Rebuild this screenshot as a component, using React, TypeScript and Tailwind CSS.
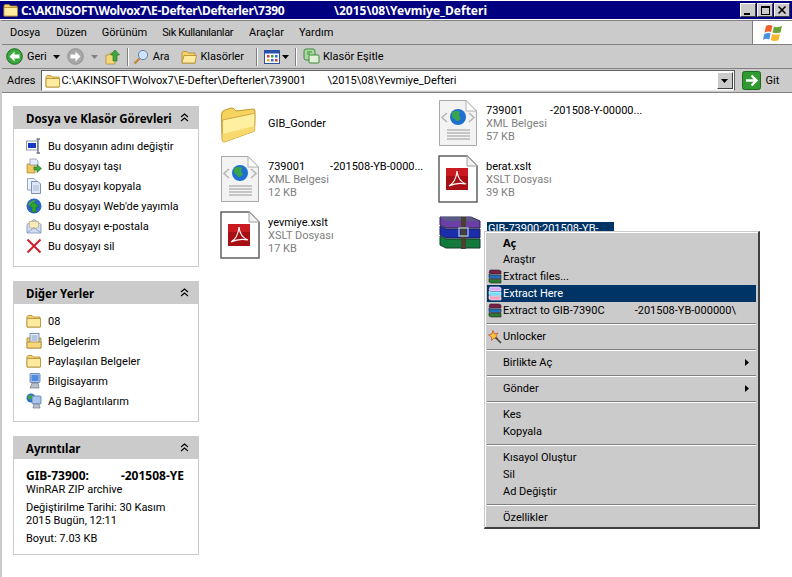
import React from "react";

const Folder = ({ s = 16, open = false }: { s?: number; open?: boolean }) => (
  <svg width={s} height={s} viewBox="0 0 16 16" className="shrink-0">
    <path d="M1 3.5 L2 2.5 H6 L7.5 4 H14 V14 H1 Z" fill="#f5cf6a" stroke="#b08a2c" strokeWidth="0.8" />
    <path d={open ? "M1 14 L3 6.5 H15.5 L14 14 Z" : "M1 5.5 H14.5 V14 H1 Z"} fill="#fdeb9f" stroke="#b08a2c" strokeWidth="0.8" />
  </svg>
);

const BigFolder = () => (
  <svg width="38" height="36" viewBox="0 0 38 36">
    <path d="M1.5 8 Q1.5 3.5 5 3 L11 1 Q14 0.5 16 4 L33 2 Q35.5 2 35 5 L34.5 24 L4 35 Q2 35 2 32 Z" fill="#f6d25f" stroke="#c09a32" />
    <path d="M2.5 13 L33.5 6.5 Q35.5 6.5 35 9 L34.5 24 L4 35 Q2.5 35 2.5 32 Z" fill="#fdf0a0" stroke="#d0aa44" />
    <path d="M2.5 27 L34.5 19 L34.5 24 L4 35 Q2.5 35 2.5 32 Z" fill="#f8d96e" />
  </svg>
);

const XmlDoc = () => (
  <svg width="40" height="48" viewBox="0 0 40 48">
    <path d="M1.5 1.5 H28 L38.5 12 V46.5 H1.5 Z" fill="#f3f3f3" stroke="#a8a8a8" />
    <path d="M28 1.5 V12 H38.5 Z" fill="#fff" stroke="#b0b0b0" />
    <circle cx="20" cy="18" r="8" fill="#1f6fd0" />
    <path d="M14 14 Q18 10 22 13 Q20 17 23 19 Q19 25 17 20 Q13 19 14 14 Z" fill="#3aa44a" />
    <path d="M9 14 L4 18.5 L9 23 M31 14 L36 18.5 L31 23" fill="none" stroke="#b5b5b5" strokeWidth="1.5" />
    <path d="M9 31 H32 M9 34 H32 M9 37 H32 M9 40 H32" stroke="#999" strokeWidth="1.2" />
  </svg>
);

const PdfDoc = () => (
  <svg width="40" height="48" viewBox="0 0 40 48">
    <path d="M1 1 H29 L39 11 V47 H1 Z" fill="#fff" stroke="#606060" strokeWidth="1.5" />
    <path d="M29 1 V11 H39 Z" fill="#f2f2f2" stroke="#a0a0a0" />
    <rect x="8" y="13" width="22" height="22" fill="#a80f15" />
    <rect x="8" y="13" width="22" height="8" fill="#c81a20" />
    <path d="M11 31 Q18 27 19 16 Q20 26 28 29 Q19 27 11 31 Z" fill="none" stroke="#fff" strokeWidth="1.1" />
  </svg>
);

const RarStack = () => (
  <svg width="44" height="36" viewBox="0 0 44 36">
    <path d="M2 2 H33 L42 6 V13 H8 L2 10 Z" fill="#6b3fa6" stroke="#2a2450" />
    <path d="M2 2 H33 L40 6 H8 Z" fill="#5a5a86" />
    <path d="M2 11 L8 14 H42 V23 H8 L2 20 Z" fill="#1a2dab" stroke="#1a2050" />
    <path d="M2 21 L8 24 H42 V33 H8 L2 30 Z" fill="#137a3d" stroke="#143a28" />
    <rect x="23" y="2" width="5" height="32" fill="#4b4030" />
    <rect x="21" y="13" width="9" height="8" fill="none" stroke="#9fb0c0" strokeWidth="1.5" />
  </svg>
);

const RarSmall = ({ light = false }: { light?: boolean }) => (
  <svg width="14" height="15" viewBox="0 0 14 15" className="shrink-0">
    <path d="M2 1 H11 L13 2 V5 H3 L1 4 Z" fill={light ? "#d9a8ff" : "#7a1f4a"} stroke={light ? "#fff" : "#222"} strokeWidth="0.6" />
    <path d="M1 5 L3 6 H13 V9.5 H3 L1 8.5 Z" fill={light ? "#6fe0ff" : "#1f6fbf"} stroke={light ? "#fff" : "#222"} strokeWidth="0.6" />
    <path d="M1 9.5 L3 10.5 H13 V14 H3 L1 13 Z" fill={light ? "#ff9fc0" : "#2a7a30"} stroke={light ? "#fff" : "#222"} strokeWidth="0.6" />
  </svg>
);

const Win = () => (
  <svg width="20" height="20" viewBox="0 0 20 20">
    <path d="M3 3 Q6 1 9.5 3 L8 9 Q5 8 1.5 9.5 Z" fill="#f0602a" />
    <path d="M11 3.5 Q14 5 19 3 L17.5 9.5 Q13 11 9.5 9.5 Z" fill="#6aa53a" />
    <path d="M1.2 11 Q5 9.5 7.7 10.5 L6.3 16.5 Q3 15 0 17 Z" fill="#4a90e0" />
    <path d="M9.2 11 Q13 12.5 17 11 L15.5 17 Q12 19 7.8 17 Z" fill="#f5b82a" />
  </svg>
);

const CircleNav = ({ dir, color, edge }: { dir: "l" | "r"; color: string; edge: string }) => (
  <svg width="17" height="17" viewBox="0 0 17 17" className="shrink-0">
    <circle cx="8.5" cy="8.5" r="7.8" fill={color} stroke={edge} />
    <path d={dir === "l" ? "M8.5 3.5 L3.5 8.5 L8.5 13.5 V10.5 H13.5 V6.5 H8.5 Z" : "M8.5 3.5 L13.5 8.5 L8.5 13.5 V10.5 H3.5 V6.5 H8.5 Z"} fill="#fff" />
  </svg>
);

const Caret = ({ c = "#000" }: { c?: string }) => (
  <svg width="7" height="4" viewBox="0 0 7 4" className="shrink-0">
    <path d="M0 0 H7 L3.5 4 Z" fill={c} />
  </svg>
);

const Sep = () => <div className="w-[2px] h-[18px] border-l border-[#808080] border-r-[1px] border-r-white shrink-0" />;

const Chevrons = () => (
  <svg width="9" height="9" viewBox="0 0 9 9">
    <path d="M1 4 L4.5 1 L8 4 M1 8 L4.5 5 L8 8" fill="none" stroke="#000" strokeWidth="1.2" />
  </svg>
);

const Rename = () => (
  <svg width="16" height="16" viewBox="0 0 16 16" className="shrink-0">
    <rect x="0.5" y="3" width="11" height="9" fill="#fff" stroke="#9098a8" />
    <rect x="2" y="5" width="8" height="5" fill="#1438c8" />
    <path d="M12 1 V15 M10.5 1 H14 M10.5 15 H14" stroke="#707888" strokeWidth="1.4" fill="none" />
  </svg>
);
const Move = () => (
  <svg width="16" height="16" viewBox="0 0 16 16" className="shrink-0">
    <path d="M1 6 H4 L5 4 H9 V15 H1 Z" fill="#f0c860" stroke="#a88430" strokeWidth="0.7" />
    <path d="M4 1 H10 L12 3 V7 H4 Z" fill="#e4ecfa" stroke="#8090b0" strokeWidth="0.7" />
    <path d="M8 12 V9 H11 V6.5 L15.5 10.5 L11 14.5 V12 Z" fill="#3fa83c" stroke="#1e6a20" strokeWidth="0.6" />
  </svg>
);
const Copy = () => (
  <svg width="16" height="16" viewBox="0 0 16 16" className="shrink-0">
    <path d="M1.5 0.5 H8 L10 2.5 V12 H1.5 Z" fill="#eef2fa" stroke="#8090b0" strokeWidth="0.8" />
    <path d="M5.5 3.5 H12 L14.5 6 V15.5 H5.5 Z" fill="#dfe8f8" stroke="#6078a8" strokeWidth="0.8" />
    <path d="M7 8 H13 M7 10 H13 M7 12 H13" stroke="#9aaccc" strokeWidth="0.8" />
  </svg>
);
const Publish = () => (
  <svg width="16" height="16" viewBox="0 0 16 16" className="shrink-0">
    <circle cx="8" cy="8" r="7.5" fill="#2a66c8" />
    <path d="M2 6 Q5 2 9 2 Q9 6 6 8 Q3 8 2 6 Z" fill="#4aa04a" />
    <path d="M8 4 L13 9 H10 V14 H6 V9 H3 Z" fill="#2fa62f" stroke="#146a14" strokeWidth="0.5" />
  </svg>
);
const Mail = () => (
  <svg width="16" height="16" viewBox="0 0 16 16" className="shrink-0">
    <path d="M1 6.5 L8 1.5 L15 6.5 V15 H1 Z" fill="#cfdcf2" stroke="#7f93b8" strokeWidth="0.8" />
    <path d="M3.5 3.5 H12.5 V9 L8 11 L3.5 9 Z" fill="#f8e9b8" stroke="#b89a50" strokeWidth="0.5" />
    <path d="M1 15 L8 9.5 L15 15" fill="none" stroke="#7f93b8" strokeWidth="0.8" />
  </svg>
);
const Del = () => (
  <svg width="16" height="16" viewBox="0 0 16 16" className="shrink-0">
    <path d="M1.5 1.5 L14.5 14.5 M14.5 1.5 L1.5 14.5" stroke="#d0202a" strokeWidth="2" />
  </svg>
);
const Docs = () => (
  <svg width="16" height="16" viewBox="0 0 16 16" className="shrink-0">
    <path d="M1 5 H15 V15 H1 Z" fill="#f3c868" stroke="#a88430" strokeWidth="0.8" />
    <rect x="4" y="0.5" width="9" height="10" fill="#e6eefb" stroke="#6078a8" strokeWidth="0.8" />
    <path d="M5.5 3 H11.5 M5.5 5 H11.5 M5.5 7 H11.5" stroke="#6f88b8" strokeWidth="0.8" />
    <path d="M1 9 H15 V15 H1 Z" fill="#f8d87c" stroke="#a88430" strokeWidth="0.8" />
  </svg>
);
const Pc = () => (
  <svg width="16" height="16" viewBox="0 0 16 16" className="shrink-0">
    <rect x="4" y="0.5" width="10" height="9" rx="1" fill="#a8c4ee" stroke="#5f78a0" strokeWidth="0.8" />
    <rect x="5.5" y="2" width="7" height="6" fill="#4f8be0" />
    <path d="M6 10 H12 L13 15 H4 Z" fill="#b8c0cc" stroke="#707880" strokeWidth="0.7" />
  </svg>
);
const Net = () => (
  <svg width="16" height="16" viewBox="0 0 16 16" className="shrink-0">
    <circle cx="5" cy="5" r="4.5" fill="#2a74c8" />
    <path d="M2 3 Q5 1 7 3 Q6 6 3 7 Z" fill="#45a845" />
    <rect x="6" y="3" width="9" height="8" rx="1" fill="#a8c4ee" stroke="#5f78a0" strokeWidth="0.8" />
    <path d="M8 11 H13 L14 15 H7 Z" fill="#b8c0cc" stroke="#707880" strokeWidth="0.7" />
  </svg>
);

const boldFont = "font-['Noto_Sans','Liberation_Sans',sans-serif] font-bold";

const Group = ({ title, children, className }: { title: string; children: React.ReactNode; className: string }) => (
  <section className={className}>
    <div className="h-[23px] bg-[#cbcbcb] flex items-center justify-between pl-[13px] pr-[10px]">
      <span className={`${boldFont} text-[11.5px] pt-[2px]`}>{title}</span>
      <Chevrons />
    </div>
    <div className="border border-t-0 border-[#cbcbcb]">{children}</div>
  </section>
);

const Link = ({ icon, children }: { icon: React.ReactNode; children: React.ReactNode }) => (
  <div className="h-[20px] flex items-center gap-[6px]">
    {icon}
    <span>{children}</span>
  </div>
);

const FileText = ({ name, gap, rest, l2, l3 }: { name: string; gap?: number; rest?: string; l2: string; l3: string }) => (
  <div className="flex flex-col leading-[13px]">
    <span className="flex whitespace-pre">
      <span>{name}</span>
      {rest && <span style={{ marginLeft: gap }}>{rest}</span>}
    </span>
    <span className="text-[#808080]">{l2}</span>
    <span className="text-[#808080]">{l3}</span>
  </div>
);

const FileCell = ({ icon, children }: { icon: React.ReactNode; children: React.ReactNode }) => (
  <div className="h-[56px] flex items-start">
    <div className="w-[48px] shrink-0 flex">{icon}</div>
    <div className="pt-[5px]">{children}</div>
  </div>
);

const Item = ({ icon, label, bold, arrow, active }: { icon?: React.ReactNode; label: React.ReactNode; bold?: boolean; arrow?: boolean; active?: boolean }) => (
  <div className={`h-[17px] flex items-center ${active ? "bg-[#003366] text-white" : ""}`}>
    <div className="w-[16px] shrink-0 flex justify-center">{icon}</div>
    <div className={`flex-1 whitespace-pre ${bold ? boldFont : ""}`}>{label}</div>
    {arrow && (
      <svg width="4" height="7" viewBox="0 0 4 7" className="mr-[7px]">
        <path d="M0 0 L4 3.5 L0 7 Z" fill="#000" />
      </svg>
    )}
  </div>
);

const MenuSep = () => (
  <div className="h-[9px] flex items-center">
    <div className="h-[2px] w-full border-t border-[#808080] border-b border-b-white" />
  </div>
);

export default function App() {
  return (
    <div className="relative w-[792px] h-[577px] bg-white overflow-hidden flex flex-col text-[11px] leading-[13px] text-black font-['Roboto','Liberation_Sans',sans-serif]">
      {/* title bar */}
      <div className={`mt-[1px] h-[18px] bg-[#000080] flex items-center pl-[3px] pr-[2px] text-white text-[12px] shrink-0 ${boldFont}`}>
        <Folder />
        <span className="ml-[2px] w-[266px] whitespace-pre tracking-[-0.33px]">C:\AKINSOFT\Wolvox7\E-Defter\Defterler\7390</span>
        <span className="ml-[47px] whitespace-pre">\2015\08\Yevmiye_Defteri</span>
        <div className="ml-auto flex gap-[1px]">
          {["min", "max", "close"].map((k) => (
            <div key={k} className="w-[16px] h-[14px] bg-[#cbcbcb] border border-t-white border-l-white border-b-[#404040] border-r-[#404040] flex items-center justify-center">
              {k === "min" && <div className="w-[6px] h-[2px] bg-black mt-[7px] mr-[2px]" />}
              {k === "max" && <div className="w-[9px] h-[9px] border border-black border-t-2" />}
              {k === "close" && (
                <svg width="8" height="8" viewBox="0 0 8 8"><path d="M0.5 0.5 L7.5 7.5 M7.5 0.5 L0.5 7.5" stroke="#000" strokeWidth="1.5" /></svg>
              )}
            </div>
          ))}
        </div>
      </div>

      {/* chrome */}
      <div className="mt-[1px] border-t border-[#808080] border-l-2 border-l-[#cbcbcb] shrink-0">
        <div className="flex h-[24px] bg-[#cbcbcb] border-b border-[#808080]">
          <div className="flex-1 flex items-center gap-[16px] pl-[8px]">
            <span>Dosya</span>
            <span>Düzen</span>
            <span className="-ml-[1px]">Görünüm</span>
            <span className="tracking-[-0.4px] -ml-[1px]">Sık Kullanılanlar</span>
            <span>Araçlar</span>
            <span className="-ml-[1px]">Yardım</span>
          </div>
          <div className="w-[40px] bg-white border-l border-[#808080] flex items-center justify-center">
            <Win />
          </div>
        </div>
        <div className="flex items-center h-[24px] bg-[#cbcbcb] border-b border-[#808080] pl-[4px]">
          <CircleNav dir="l" color="#3aa83a" edge="#1f6a1f" />
          <span className="ml-[4px]">Geri</span>
          <div className="ml-[6px]"><Caret /></div>
          <div className="ml-[7px]"><CircleNav dir="r" color="#a8a8a8" edge="#909090" /></div>
          <div className="ml-[7px]"><Caret c="#808080" /></div>
          <svg width="16" height="16" viewBox="0 0 16 16" className="ml-[7px] shrink-0">
            <path d="M1 6 H4 L5 4 H10 V15 H1 Z" fill="#f5d77a" stroke="#a88430" strokeWidth="0.7" />
            <path d="M8 12 V6 H5.5 L10 1 L14.5 6 H12 V12 Z" fill="#3fa83c" stroke="#1e6a20" strokeWidth="0.6" />
          </svg>
          <div className="ml-[6px]"><Sep /></div>
          <svg width="16" height="16" viewBox="0 0 16 16" className="ml-[4px] shrink-0">
            <circle cx="10" cy="6" r="4.6" fill="#cfe4fb" stroke="#5f80b0" />
            <path d="M6.5 9.5 L1.5 14.5" stroke="#c08a3a" strokeWidth="2.4" />
          </svg>
          <span className="ml-[4px]">Ara</span>
          <div className="ml-[12px]"><Folder open /></div>
          <span className="ml-[3px]">Klasörler</span>
          <div className="ml-[12px]"><Sep /></div>
          <svg width="16" height="16" viewBox="0 0 16 16" className="ml-[6px] shrink-0">
            <rect x="0.5" y="1.5" width="15" height="13" fill="#fff" stroke="#2a50a8" />
            <rect x="0.5" y="1.5" width="15" height="3" fill="#2a50a8" />
            <rect x="3" y="6" width="2.5" height="2.5" fill="#d83a2a" />
            <rect x="7" y="6" width="2.5" height="2.5" fill="#3a9a3a" />
            <rect x="11" y="6" width="2.5" height="2.5" fill="#2a70d8" />
            <rect x="3" y="10" width="2.5" height="2.5" fill="#e8a82a" />
            <rect x="7" y="10" width="2.5" height="2.5" fill="#2a70d8" />
            <rect x="11" y="10" width="2.5" height="2.5" fill="#d83a2a" />
          </svg>
          <div className="ml-[2px]"><Caret /></div>
          <div className="ml-[6px]"><Sep /></div>
          <svg width="17" height="17" viewBox="0 0 17 17" className="ml-[6px] shrink-0">
            <rect x="1" y="1" width="11" height="11" rx="2" fill="#a8d8a0" stroke="#3f8a3a" />
            <rect x="6" y="7" width="10" height="8" rx="1" fill="#e0f0d8" stroke="#3f8a3a" />
            <path d="M4 4 H9 M4 6 H7" stroke="#3f8a3a" />
          </svg>
          <span className="ml-[3px]">Klasör Eşitle</span>
        </div>
        <div className="flex items-center h-[24px] bg-[#cbcbcb] border-b border-[#808080] pl-[5px]">
          <span>Adres</span>
          <div className="ml-[5px] w-[694px] h-[21px] bg-white border border-t-[#606060] border-l-[#606060] border-b-[#e8e8e8] border-r-[#606060] flex items-center pl-[3px] pr-[1px]">
            <Folder />
            <span className="ml-[1px] w-[241px] whitespace-pre">C:\AKINSOFT\Wolvox7\E-Defter\Defterler\739001</span>
            <span className="ml-[25px] whitespace-pre">\2015\08\Yevmiye_Defteri</span>
            <div className="ml-auto w-[16px] h-[17px] bg-[#cbcbcb] border border-t-white border-l-white border-b-[#404040] border-r-[#404040] flex items-center justify-center">
              <Caret />
            </div>
          </div>
          <svg width="19" height="19" viewBox="0 0 19 19" className="ml-[7px] shrink-0">
            <rect x="0.5" y="0.5" width="18" height="18" rx="2" fill="#2f9a2f" stroke="#1f6a1f" />
            <path d="M4 9.5 H13 M9.5 4.5 L14.5 9.5 L9.5 14.5" fill="none" stroke="#fff" strokeWidth="2.4" />
          </svg>
          <span className="ml-[5px]">Git</span>
        </div>
      </div>

      {/* body */}
      <div className="flex-1 flex border-l-2 border-l-[#cbcbcb]">
        <aside className="w-[186px] ml-[11px] shrink-0 pt-[13px] flex flex-col">
          <Group title="Dosya ve Klasör Görevleri" className="">
            <div className="h-[137px] pl-[12px] pt-[7px]">
              <Link icon={<Rename />}>Bu dosyanın adını değiştir</Link>
              <Link icon={<Move />}>Bu dosyayı taşı</Link>
              <Link icon={<Copy />}>Bu dosyayı kopyala</Link>
              <Link icon={<Publish />}>Bu dosyayı Web'de yayımla</Link>
              <Link icon={<Mail />}>Bu dosyayı e-postala</Link>
              <Link icon={<Del />}>Bu dosyayı sil</Link>
            </div>
          </Group>
          <Group title="Diğer Yerler" className="mt-[14px]">
            <div className="h-[117px] pl-[12px] pt-[7px]">
              <Link icon={<Folder />}>08</Link>
              <Link icon={<Docs />}>Belgelerim</Link>
              <Link icon={<Folder />}>Paylaşılan Belgeler</Link>
              <Link icon={<Pc />}>Bilgisayarım</Link>
              <Link icon={<Net />}>Ağ Bağlantılarım</Link>
            </div>
          </Group>
          <Group title="Ayrıntılar" className="mt-[14px]">
            <div className="h-[95px] pl-[12px] pt-[10px]">
              <div className={`flex whitespace-pre text-[12px] ${boldFont}`}>
                <span>GIB-73900:</span>
                <span className="ml-[32px]">-201508-YE</span>
              </div>
              <div className="mt-[1px]">WinRAR ZIP archive</div>
              <div className="mt-[5px] w-[160px]">Değiştirilme Tarihi: 30 Kasım 2015 Bugün, 12:11</div>
              <div className="mt-[5px]">Boyut: 7.03 KB</div>
            </div>
          </Group>
        </aside>

        <main className="ml-[21px] pt-[6px] grid grid-cols-[218px_218px] content-start">
          <FileCell icon={<div className="pt-[8px]"><BigFolder /></div>}>
            <div className="pt-[13px]">GIB_Gonder</div>
          </FileCell>
          <FileCell icon={<XmlDoc />}>
            <FileText name="739001" gap={27} rest="-201508-Y-00000..." l2="XML Belgesi" l3="57 KB" />
          </FileCell>
          <FileCell icon={<XmlDoc />}>
            <FileText name="739001" gap={25} rest="-201508-YB-0000..." l2="XML Belgesi" l3="12 KB" />
          </FileCell>
          <FileCell icon={<PdfDoc />}>
            <FileText name="berat.xslt" l2="XSLT Dosyası" l3="39 KB" />
          </FileCell>
          <FileCell icon={<PdfDoc />}>
            <FileText name="yevmiye.xslt" l2="XSLT Dosyası" l3="17 KB" />
          </FileCell>
          <FileCell icon={<div className="pt-[4px]"><RarStack /></div>}>
            <div className="mt-[6px] ml-[1px] w-[127px] h-[13px] pl-[1px] bg-[#003366] text-white whitespace-pre">GIB-73900:201508-YB-</div>
          </FileCell>
        </main>
      </div>

      {/* context menu */}
      <div className="absolute left-[484px] top-[231px] w-[276px] h-[298px] bg-[#cbcbcb] border-t border-t-[#cbcbcb] border-l border-l-[#cbcbcb] border-r-2 border-r-[#404040] border-b-2 border-b-[#404040] shadow-[inset_1px_1px_0_#fff] px-[2px] pt-[2px]">
        <Item bold label="Aç" />
        <Item label="Araştır" />
        <Item icon={<RarSmall />} label="Extract files..." />
        <Item active icon={<RarSmall light />} label="Extract Here" />
        <Item icon={<RarSmall />} label={<span>Extract to GIB-7390C<span className="ml-[30px]">-201508-YB-000000\</span></span>} />
        <MenuSep />
        <Item
          icon={
            <svg width="14" height="14" viewBox="0 0 14 14">
              <path d="M5 0.5 L6.5 4 L10 3 L8 6 L10 9 L6 8 L3.5 10.5 L3.5 7 L0.5 5 L4 4 Z" fill="#f5c83a" stroke="#c8402a" strokeWidth="0.7" />
              <path d="M7.5 7.5 L13 13" stroke="#404040" strokeWidth="1.6" />
            </svg>
          }
          label="Unlocker"
        />
        <MenuSep />
        <Item label="Birlikte Aç" arrow />
        <MenuSep />
        <Item label="Gönder" arrow />
        <MenuSep />
        <Item label="Kes" />
        <Item label="Kopyala" />
        <MenuSep />
        <Item label="Kısayol Oluştur" />
        <Item label="Sil" />
        <Item label="Ad Değiştir" />
        <MenuSep />
        <Item label="Özellikler" />
      </div>
    </div>
  );
}
